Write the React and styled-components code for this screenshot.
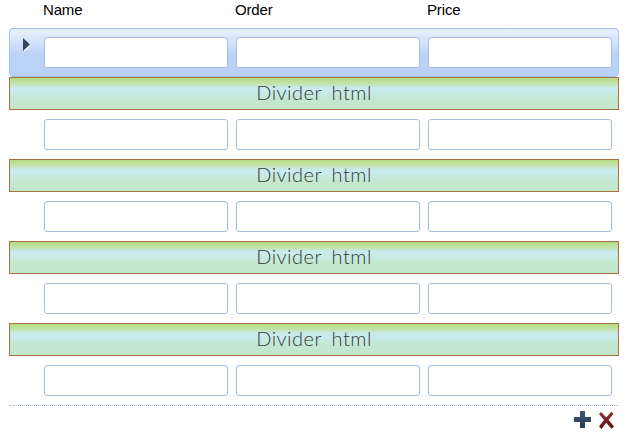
import React from 'react';
import styled, { createGlobalStyle } from 'styled-components';

const GlobalStyle = createGlobalStyle`
  body { margin: 0; background: #fff; overflow: hidden; }
  *, *::before, *::after { box-sizing: border-box; }
`;

const Page = styled.main`
  width: 610px;
  margin-left: 9px;
  font: 15px/20px "Liberation Sans", Arial, sans-serif;
  color: #000;
`;

const Grid = styled.div`
  display: grid;
  grid-template-columns: repeat(3, 184px);
  column-gap: 8px;
`;

const Header = styled(Grid)`
  height: 28px;
  padding-left: 34px;
  letter-spacing: -0.15px;
`;

const Row = styled.div`
  display: flex;
  height: 49px;
  padding: 8px 0;
  border: 1px solid ${({ $selected }) => ($selected ? '#9ec2f2' : 'transparent')};
  border-radius: 4px;
  background: ${({ $selected }) =>
    $selected ? 'linear-gradient(#e9f1fd 0, #d9e6fb 10px, #bcd3f8 25px, #b9d1f8 100%)' : 'transparent'};
`;

const RowMarker = styled.div`
  width: 34px;
  flex: none;
  svg { display: block; margin: 0 0 0 13px; }
`;

const Field = styled.input`
  width: 184px;
  height: 31px;
  padding: 4px 6px;
  border: 1px solid #a5bddd;
  border-radius: 3px;
  background: #fff;
  font: inherit;
  outline: none;
`;

const Divider = styled.div`
  height: 33px;
  border: 1px solid #aa7145;
  background: linear-gradient(#b3db7e 0, #c1e3a9 5px, #c9ebef 10px, #c9ebec 13px, #c3e7d0 21px, #c3e7cb 100%);
  text-align: center;
  font: 300 20px/29px Lato, "Open Sans", sans-serif;
  letter-spacing: 0.5px;
  word-spacing: 4px;
  color: #333b38;
`;

const Toolbar = styled.footer`
  display: flex;
  justify-content: flex-end;
  gap: 7px;
  padding: 5px 4px 0 0;
  border-top: 1px dotted #a0b6dc;
`;

const ToolButton = styled.button`
  display: block;
  padding: 0;
  border: 0;
  background: none;
  svg { display: block; }
`;

const Arrow = () => (
  <svg width="9" height="15" viewBox="0 0 9 15">
    <path d="M1 2L8 8.5L1 15Z" fill="#fff" />
    <path d="M0 1L7 7.5L0 14Z" fill="#334660" />
  </svg>
);

const AddIcon = () => (
  <svg width="18" height="19" viewBox="0 0 18 19">
    <defs>
      <linearGradient id="addFill" x1="0" y1="0" x2="0" y2="1">
        <stop stopColor="#425772" />
        <stop offset="1" stopColor="#293951" />
      </linearGradient>
    </defs>
    <path d="M6 0H11V6H17V11H11V17H6V11H0V6H6Z" fill="url(#addFill)" />
  </svg>
);

const DeleteIcon = () => (
  <svg width="16" height="19" viewBox="0 0 16 19">
    <defs>
      <linearGradient id="deleteFill" x1="0" y1="0" x2="0" y2="1">
        <stop stopColor="#8b3034" />
        <stop offset="1" stopColor="#5e1015" />
      </linearGradient>
    </defs>
    <path d="M0 3L2 1L7.3 6.5L12.3 0.7L14.5 2.8L9.6 8.8L15 15.5L12.5 17.7L7.2 11.8L2.5 18L0 15.5L5 9Z" fill="url(#deleteFill)" />
  </svg>
);

const columns = ['Name', 'Order', 'Price'];
const rows = [0, 1, 2, 3, 4];

export default function App() {
  return (
    <>
      <GlobalStyle />
      <Page>
        <Header>{columns.map((name) => <span key={name}>{name}</span>)}</Header>
        {rows.map((id) => (
          <React.Fragment key={id}>
            <Row $selected={id === 0}>
              <RowMarker>{id === 0 && <Arrow />}</RowMarker>
              <Grid>{columns.map((name) => <Field key={name} aria-label={name} />)}</Grid>
            </Row>
            {id < rows.length - 1 && <Divider>Divider html</Divider>}
          </React.Fragment>
        ))}
        <Toolbar>
          <ToolButton aria-label="Add"><AddIcon /></ToolButton>
          <ToolButton aria-label="Delete"><DeleteIcon /></ToolButton>
        </Toolbar>
      </Page>
    </>
  );
}
